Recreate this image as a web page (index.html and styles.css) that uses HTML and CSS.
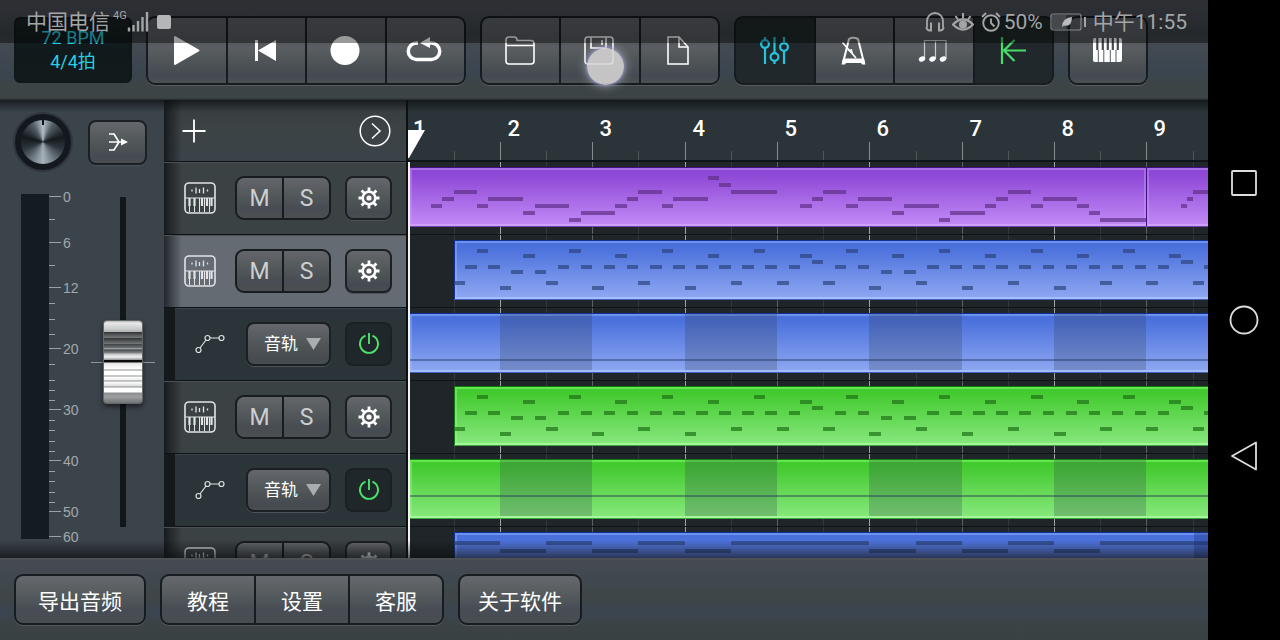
FILE: index.html
```html
<!DOCTYPE html>
<html lang="zh-CN">
<head>
<meta charset="utf-8">
<title>音轨编辑</title>
<link rel="stylesheet" href="styles.css">
</head>
<body>
<svg class="defs" width="0" height="0" aria-hidden="true">
  <symbol id="synth" viewBox="0 0 32 32">
    <rect x="1" y="1" width="30" height="30" rx="4" fill="none" stroke="#e2e4e6" stroke-width="1.6"/>
    <path d="M1 16h30" stroke="#e2e4e6" stroke-width="1"/>
    <path d="M8 7.500v2M12 5.500v6M15.500 7v4M19.500 5.500v6M23.500 7.500v2" stroke="#e2e4e6" stroke-width="1.300"/>
    <path d="M5.500 16v14M10.500 16v14M15.500 16v14M20.500 16v14M25.500 16v14" stroke="#e2e4e6" stroke-width="1"/>
    <path d="M5.500 16v8M10.500 16v8M18 16v8M23 16v8M27.500 16v8" stroke="#e2e4e6" stroke-width="2.200"/>
  </symbol>
  <symbol id="gear" viewBox="0 0 24 24">
    <g stroke="#fff" fill="none"><circle cx="12" cy="12" r="6.300" stroke-width="2.600"/><circle cx="12" cy="12" r="2.600" fill="#fff" stroke="none"/>
    <path d="M12 1.500v4.500M12 18v4.500M1.500 12h4.500M18 12h4.500M4.600 4.600l3 3M16.400 16.400l3 3M4.600 19.400l3-3M16.400 7.600l3-3" stroke-width="2.800"/></g>
  </symbol>
  <symbol id="curve" viewBox="0 0 30 20">
    <g fill="none" stroke="#dfe2e4" stroke-width="1.200"><circle cx="3.500" cy="16" r="2.500"/><circle cx="12.500" cy="4" r="2.500"/><circle cx="26.500" cy="4" r="2.500"/><path d="M5 14l6-8M15 4h9"/></g>
  </symbol>
  <symbol id="power" viewBox="0 0 24 24">
    <path d="M8.500 3.600a9 9 0 1 0 7 0M12 1v11" fill="none" stroke="#4be36b" stroke-width="1.900"/>
  </symbol>
</svg>

<div class="screen">
  <div class="app">
    <header class="toolbar">
      <button class="lcd"><span>72 BPM</span><span>4/4拍</span></button>
      <div class="group four">
        <button class="tool" aria-label="播放"><svg class="icon" viewBox="0 0 36 36"><path d="M7 4v27L30.500 17.500z" fill="#fff" stroke="#fff" stroke-width="2" stroke-linejoin="round"/></svg></button>
        <button class="tool" aria-label="回到开头"><svg class="icon" viewBox="0 0 36 36"><path d="M8 7h3v21H8zM29 7v21L11 17.500z" fill="#fff"/></svg></button>
        <button class="tool" aria-label="录音"><svg class="icon" viewBox="0 0 36 36"><circle cx="18" cy="17.500" r="14.500" fill="#fff"/></svg></button>
        <button class="tool" aria-label="循环"><svg class="icon" viewBox="0 0 36 36"><path d="M12 10h-1.500a8 8 0 0 0 0 16.500h15a8 8 0 0 0 0-16.500H23" fill="none" stroke="#fff" stroke-width="3.500"/><path d="M14 10l10-6v11z" fill="#fff"/></svg></button>
      </div>
      <div class="group three">
        <button class="tool" aria-label="打开"><svg class="icon line" viewBox="0 0 36 36"><path d="M4 11V7q0-3 3-3h5q3 0 3 3v.500h14q3 0 3 3V28q0 3-3 3H7q-3 0-3-3zM4 12.500h28"/></svg></button>
        <button class="tool" aria-label="保存"><svg class="icon line" viewBox="0 0 36 36"><rect x="4" y="4" width="28" height="27" rx="3"/><path d="M10 4v11h15V4M21 7v5"/></svg></button>
        <button class="tool" aria-label="新建"><svg class="icon line" viewBox="0 0 36 36"><path d="M8 4h11l9 10v17H8zM19 4v10h9"/></svg></button>
      </div>
      <div class="group four">
        <button class="tool on" aria-label="混音器"><svg class="icon" viewBox="0 0 36 36"><g fill="none" stroke="#23c6de" stroke-width="2.200"><path d="M9 4v3M9 15v16M18.500 4v16M18.500 28v3M28 4v6.500M28 18v13"/><circle cx="9" cy="11" r="3.900"/><circle cx="18.500" cy="24" r="3.900"/><circle cx="28" cy="14" r="3.900"/></g></svg></button>
        <button class="tool" aria-label="节拍器"><svg class="icon" viewBox="0 0 36 36"><path d="M8 30l6-24q4-2.500 9 0l6 24" fill="none" stroke="#fff" stroke-width="2"/><path d="M8 25.500h21l1.500 6H27l-1-1.500H11l-1 1.500H6.500z" fill="#fff"/><path d="M7.500 9.500L21 25" stroke="#fff" stroke-width="1.600"/><path d="M12 17l5-1 1 5z" fill="#fff"/></svg></button>
        <button class="tool" aria-label="音符"><svg class="icon" viewBox="0 0 36 36"><path d="M9.500 26V7.500H31V26M20.500 7.500V26" fill="none" stroke="#c9cbcd" stroke-width="1.200"/><g fill="#fff"><ellipse cx="7" cy="26" rx="3.300" ry="2.600" transform="rotate(-25 7 26)"/><ellipse cx="17.500" cy="26" rx="3.300" ry="2.600" transform="rotate(-25 17.500 26)"/><ellipse cx="28" cy="26" rx="3.300" ry="2.600" transform="rotate(-25 28 26)"/></g></svg></button>
        <button class="tool on" aria-label="跟随"><svg class="icon" viewBox="0 0 36 36"><path d="M8 4v27M32 17.500H10M20.500 7L10 17.500 20.500 28" fill="none" stroke="#47dd68" stroke-width="2.200"/></svg></button>
      </div>
      <div class="group one">
        <button class="tool" aria-label="键盘"><svg class="icon" viewBox="0 0 36 36"><rect x="4" y="5" width="29" height="24" rx="2" fill="#fff"/><path d="M8.300 5v12M13.800 5v12M18.800 5v12M23.800 5v12M28.800 5v12" stroke="#444a4d" stroke-width="2.200"/><path d="M9.300 17v12M14.800 17v12M21.300 17v12M27 17v12" stroke="#565c60" stroke-width="1"/></svg></button>
      </div>
    </header>

    <main class="workspace">
      <section class="mixer">
        <div class="mixer-top">
          <div class="knob" role="slider" aria-label="声像" aria-valuenow="0"></div>
          <button class="key route" aria-label="路由"><svg width="22" height="20" viewBox="0 0 22 20"><path d="M2 2h5l5 8-5 8H2M2 10h13" fill="none" stroke="#fff" stroke-width="1.700"/><path d="M14 6.500l7 3.500-7 3.500z" fill="#fff"/></svg></button>
        </div>
        <div class="levels">
          <div class="meter"></div>
          <svg class="scale" id="scale" width="32" height="356" aria-hidden="true"></svg>
          <div class="fader"><input type="range" min="0" max="100" value="50" aria-label="音量"></div>
        </div>
      </section>

      <section class="tracks">
        <div class="tracks-head">
          <button class="plain" aria-label="添加音轨"><svg width="24" height="24" viewBox="0 0 24 24"><path d="M12 .500v23M.500 12h23" stroke="#fff" stroke-width="1.800"/></svg></button>
          <button class="plain" aria-label="展开"><svg width="32" height="32" viewBox="0 0 32 32"><g fill="none" stroke="#fff" stroke-width="1.500"><circle cx="16" cy="16" r="14.800"/><path d="M13 8.500l8 7.500-8 7.500"/></g></svg></button>
        </div>
        <div class="track"><svg class="inst"><use href="#synth"/></svg><div class="ctl"><div class="ms"><button>M</button><button>S</button></div><button class="key sq" aria-label="音轨设置"><svg class="gear"><use href="#gear"/></svg></button></div></div>
        <div class="track selected"><svg class="inst"><use href="#synth"/></svg><div class="ctl"><div class="ms"><button>M</button><button>S</button></div><button class="key sq" aria-label="音轨设置"><svg class="gear"><use href="#gear"/></svg></button></div></div>
        <div class="track sub"><svg class="auto"><use href="#curve"/></svg><div class="ctl"><div class="pick"><select class="key" aria-label="自动化参数"><option>音轨</option></select><svg class="caret" viewBox="0 0 15 12"><path d="M0 0h15L7.500 12z" fill="#a9acb0"/></svg></div><button class="key sq on" aria-label="启用"><svg class="gear"><use href="#power"/></svg></button></div></div>
        <div class="track"><svg class="inst"><use href="#synth"/></svg><div class="ctl"><div class="ms"><button>M</button><button>S</button></div><button class="key sq" aria-label="音轨设置"><svg class="gear"><use href="#gear"/></svg></button></div></div>
        <div class="track sub"><svg class="auto"><use href="#curve"/></svg><div class="ctl"><div class="pick"><select class="key" aria-label="自动化参数"><option>音轨</option></select><svg class="caret" viewBox="0 0 15 12"><path d="M0 0h15L7.500 12z" fill="#a9acb0"/></svg></div><button class="key sq on" aria-label="启用"><svg class="gear"><use href="#power"/></svg></button></div></div>
        <div class="track"><svg class="inst"><use href="#synth"/></svg><div class="ctl"><div class="ms"><button>M</button><button>S</button></div><button class="key sq" aria-label="音轨设置"><svg class="gear"><use href="#gear"/></svg></button></div></div>
      </section>

      <section class="timeline">
        <svg class="ruler" id="ruler"></svg>
        <div id="lanes"></div>
        <svg class="playhead" viewBox="0 0 18 29" aria-hidden="true"><path d="M0 0h17L1 28H0z" fill="#fff"/></svg>
      </section>
    </main>

    <footer class="bottom">
      <div class="menu"><button class="wide">导出音频</button></div>
      <div class="menu"><button>教程</button><button>设置</button><button>客服</button></div>
      <div class="menu"><button class="about">关于软件</button></div>
    </footer>

    <div class="status">
      <div class="status-side">
        <span>中国电信</span><small>4G</small>
        <svg class="signal" width="22" height="20" viewBox="0 0 22 20"><path d="M2 15.500v4M6.500 13v6.500M11 9v10.500M15.500 5v14.500M20 0v19.500" stroke="#a3a5a7" stroke-width="2.400"/></svg>
        <i class="stop"></i>
      </div>
      <div class="status-side right">
        <svg width="20" height="20" viewBox="0 0 20 20"><path d="M2 15V9a8 8 0 0 1 16 0v6" fill="none" stroke="#a3a5a7" stroke-width="1.800"/><path d="M6 10.500v8H4.500Q1.500 18 1.500 15M14 10.500v8h1.500q3-.500 3-3.500" fill="none" stroke="#a3a5a7" stroke-width="2"/></svg>
        <svg width="22" height="20" viewBox="0 0 22 20"><path d="M1 12.500q10-10 20 0-10 10-20 0z" fill="none" stroke="#a3a5a7" stroke-width="2.200"/><circle cx="11" cy="12.500" r="4" fill="#a3a5a7"/><path d="M11 1v5M3.500 4l2.500 3.500M18.500 4L16 7.500" stroke="#a3a5a7" stroke-width="2"/></svg>
        <svg class="alarm" width="20" height="20" viewBox="0 0 20 20"><g fill="none" stroke="#a3a5a7" stroke-width="1.900"><circle cx="10" cy="11" r="7.800"/><path d="M10 6.500V11l3.500 3.500M1 5l4-4M19 5l-4-4"/></g></svg>
        <span>50%</span>
        <svg class="battery" width="36" height="18" viewBox="0 0 36 18"><rect x="1" y="1" width="30" height="16" rx="2" fill="none" stroke="#85888a" stroke-width="1.200"/><path d="M2 2h14v14H2z" fill="#45494b"/><path d="M12 14q0-9 10-10 0 10-8 8.500z" fill="#b9bbbc"/><path d="M35 4v10" stroke="#a3a5a7" stroke-width="2"/></svg>
        <span>中午11:55</span>
      </div>
    </div>
    <div class="touch"></div>
  </div>

  <nav class="sysnav">
    <button class="plain" aria-label="最近任务"><svg width="32" height="32" viewBox="0 0 32 32"><rect x="4" y="4" width="24" height="24" rx="1" fill="none" stroke="#ddd" stroke-width="1.800"/></svg></button>
    <button class="plain" aria-label="主页"><svg width="32" height="32" viewBox="0 0 32 32"><circle cx="16" cy="16" r="13.500" fill="none" stroke="#ddd" stroke-width="1.800"/></svg></button>
    <button class="plain" aria-label="返回"><svg width="32" height="32" viewBox="0 0 32 32"><path d="M28 1.500v27L4 15z" fill="none" stroke="#ddd" stroke-width="1.800" stroke-linejoin="round"/></svg></button>
  </nav>
</div>
<script src="app.js"></script>
</body>
</html>
```
FILE: styles.css
```css
* { box-sizing: border-box; }

body {
  margin: 0;
  background: #000;
  font-family: Roboto, "Noto Sans CJK SC", sans-serif;
  color: #fff;
}

button, select {
  margin: 0;
  padding: 0;
  border: 0;
  background: none;
  color: inherit;
  font-family: inherit;
}

svg { display: block; }
.defs { position: absolute; }

.screen { display: flex; height: 100vh; overflow: hidden; }
.app {
  position: relative;
  flex: 1;
  min-width: 0;
  display: flex;
  flex-direction: column;
  overflow: hidden;
}

/* toolbar */
.toolbar {
  display: flex;
  gap: 14px;
  padding: 16px 14px 15px;
  background: linear-gradient(#4c5056, #484c54 15%, #3b4346 35%, #444a52 45%, #3a454f 72%, #3c4445 86%, #3d4446 98%, #23292b);
}
.lcd {
  width: 118px;
  margin: 1px 0 2px;
  padding: 0 0 1px;
  border: 2px solid #11181a;
  border-radius: 6px;
  background: linear-gradient(#1a2222, #10191c 50%, #131a1b);
  color: #26cfe4;
  font-size: 18px;
  line-height: 24px;
}
.lcd span { display: block; }
.group, .ms, .menu {
  display: flex;
  gap: 2px;
  border: 2px solid #161c20;
  border-radius: 9px;
  background: #161c20;
  box-shadow: 0 1px 0 #565b60;
  overflow: hidden;
}
.four { width: 320px; }
.three { width: 240px; }
.one { width: 80px; }
.tool {
  flex: 1;
  height: 65px;
  padding-right: 2px;
  display: grid;
  place-items: center;
  background: linear-gradient(#5d6168, #565a5d 40%, #5b5f63 44%, #4f5557 65%, #444a52 88%, #4b5052);
}
.tool.on { background: #20282b; }
.icon { width: 36px; height: 36px; }
.line { fill: none; stroke: #fff; stroke-width: 1.6; }

/* workspace */
.workspace {
  position: relative;
  flex: 1;
  min-height: 0;
  display: grid;
  grid-template-columns: 164px 244px 1fr;
  overflow: hidden;
  background: #1f2528;
}
.workspace::before, .workspace::after {
  content: "";
  position: absolute;
  z-index: 3;
  left: 0;
  right: 0;
  pointer-events: none;
}
.workspace::before { top: 0; height: 12px; background: linear-gradient(rgba(10, 14, 16, .7), transparent); }
.workspace::after { bottom: 0; height: 18px; background: linear-gradient(transparent, rgba(10, 12, 14, .65)); }

.mixer { background: #3b434b; overflow: hidden; }
.mixer-top {
  display: flex;
  align-items: center;
  justify-content: space-between;
  padding: 14px 17px 0 15px;
}
.knob {
  position: relative;
  width: 56px;
  height: 56px;
  border: 6px solid #12181e;
  border-radius: 50%;
  background: conic-gradient(#b5bfc7, #525c65 30deg, #14191d 75deg, #2d353c 110deg, #a6b2bc 180deg, #2d353c 250deg, #14191d 285deg, #525c65 330deg, #b5bfc7);
  box-shadow: 0 0 0 2px #2f363d;
}
.knob::before {
  content: "";
  position: absolute;
  top: 0;
  left: 21px;
  width: 2px;
  height: 5px;
  background: #0d1215;
}
.key {
  border: 2px solid #1b2024;
  border-radius: 8px;
  background: linear-gradient(#65676c, #565b5e 35%, #4c5154 65%, #454b52 85%, #484d4f);
  box-shadow: 0 1px 0 #4c5257;
  display: grid;
  place-items: center;
}
.route { width: 59px; height: 45px; }
.levels { display: flex; align-items: flex-start; padding: 24px 0 0 21px; }
.meter { width: 28px; height: 345px; background: #121c21; }
.scale { overflow: visible; }
.scale text { font: 14px "Liberation Sans", sans-serif; fill: #a3a8ab; }
.scale path { stroke: #9ba1a5; }
.fader {
  position: relative;
  width: 64px;
  margin: 3px 0 0 10px;
  display: flex;
  justify-content: center;
}
.fader::before {
  content: "";
  position: absolute;
  left: 0;
  right: 0;
  top: 50%;
  height: 1px;
  background: #90979b;
}
.fader input {
  position: relative;
  appearance: none;
  writing-mode: vertical-lr;
  direction: rtl;
  width: 42px;
  height: 330px;
  margin: 0;
  background: linear-gradient(#12181a, #12181a) center / 6px 100% no-repeat;
}
.fader input::-webkit-slider-thumb {
  appearance: none;
  width: 40px;
  height: 84px;
  border: 1px solid #63686b;
  border-radius: 4px;
  box-shadow: 0 3px 5px rgba(0, 0, 0, .5);
  background: linear-gradient(#b5b6b6 0, #e9e9e9 2px, #c9caca 8px, #aeb0b0 11px, #303233 11px, #55585a 14px, #77797a 17px, #303233 17px, #6b6e70 22px, #a5a7a8 22px, #3e4143 23px, #707375 27px, #b8b9ba 27px, #4b4e50 29px, #84888a 32px, #c4c4c4 33px, #f1f1f1 36px, #8d9092 39px, #0b0c0c 39px, #0b0c0c 41px, #e6e6e6 42px, #fff 48px, #8e8f8f 49px, #fff 50px, #fff 54px, #909292 55px, #fff 56px, #eee 59px, #8f9191 60px, #fff 61px, #ddd 65px, #8c8e8e 66px, #fff 67px, #fff 71px, #8b8e8f 72px, #9ea0a0 76px, #6e7272 82px);
}

/* track list */
.tracks {
  overflow: hidden;
  background: #14191c;
  border-right: 2px solid #0c1012;
}
.tracks-head, .track {
  display: flex;
  align-items: center;
  justify-content: space-between;
  border-bottom: 1px solid #0d1216;
}
.tracks-head {
  height: 62px;
  padding: 0 15px 0 18px;
  background: linear-gradient(90deg, #161b1e, transparent 18px), linear-gradient(#373c3f, #3c4345 50%, #3b434b);
}
.plain { display: grid; place-items: center; }
.track {
  height: 73px;
  padding: 0 14px 0 20px;
  background: linear-gradient(90deg, #161b1e, transparent 18px), #3b4244;
  box-shadow: inset 0 1px 0 #4b5154;
}
.track.selected { background: linear-gradient(90deg, #22282c, transparent 18px), #646b73; }
.track.sub {
  margin-left: 11px;
  padding-left: 20px;
  background: #2b3439;
  box-shadow: inset 0 1px 0 #3c4549;
}
.inst { width: 32px; height: 32px; }
.auto { width: 30px; height: 20px; }
.ctl { display: flex; gap: 14px; }
.ms { width: 96px; height: 44px; box-shadow: none; }
.ms button {
  flex: 1;
  color: #cdcfd0;
  font-size: 23px;
  background: linear-gradient(#63666a, #54595c 40%, #484d54 75%, #4b4f50);
}
.sq { width: 47px; height: 44px; }
.key.on { background: #20272a; box-shadow: none; }
.gear { width: 24px; height: 24px; }
.pick { position: relative; }
.pick select {
  appearance: none;
  width: 85px;
  height: 44px;
  padding-left: 16px;
  font-size: 17px;
}
.caret { position: absolute; right: 10px; top: 16px; width: 15px; height: 12px; pointer-events: none; }

/* timeline */
.timeline { position: relative; min-width: 0; overflow: hidden; }
.ruler { width: 100%; height: 62px; background: #2b3438; border-bottom: 2px solid #0e1417; }
.ruler text { font-size: 22px; font-weight: 500; fill: #fff; }
.lane { width: 100%; height: 73px; border-bottom: 1px solid #0f1416; }
.timeline::after {
  content: "";
  position: absolute;
  left: 0;
  top: 62px;
  bottom: 0;
  width: 2px;
  background: #f2f2f2;
}
.playhead { position: absolute; left: 0; top: 30px; width: 18px; height: 29px; }

/* bottom menu */
.bottom {
  display: flex;
  align-items: flex-start;
  gap: 14px;
  height: 82px;
  padding: 14px;
  border-top: 2px solid #4e5154;
  background: linear-gradient(#454a52, #3f484e 30%, #3f4647 42%, #3b4550 66%, #3b4345 80%, #3a4143);
}
.menu button {
  height: 47px;
  padding: 0 25px;
  font-size: 21px;
  background: linear-gradient(#66686d, #595e61 30%, #50575a 50%, #474c55 72%, #484e50);
}
.menu .wide { padding: 0 22px; }
.menu .about { padding: 0 18px; }

/* system status */
.status {
  position: absolute;
  z-index: 5;
  left: 0;
  right: 0;
  top: 0;
  height: 43px;
  display: flex;
  justify-content: space-between;
  padding: 0 21px 0 26px;
  background: rgba(0, 0, 0, .4);
  color: #a3a5a7;
  font-size: 21px;
  font-weight: 400;
  line-height: 44px;
  pointer-events: none;
}
.status-side { display: flex; align-items: center; }
.right { gap: 7px; }
.alarm { margin-right: -4px; }
.status small { padding-left: 3px; font-size: 11px; line-height: 32px; align-self: flex-start; }
.stop { width: 14px; height: 14px; margin-left: 8px; border-radius: 2px; background: #b4b6b8; }
.touch {
  position: absolute;
  z-index: 6;
  left: 587px;
  top: 48px;
  width: 37px;
  height: 37px;
  border-radius: 50%;
  background: rgba(215, 213, 213, .88);
  box-shadow: 0 0 3px 1px rgba(150, 150, 220, .7), 0 0 8px 3px rgba(200, 200, 210, .4);
  pointer-events: none;
}

.sysnav {
  width: 72px;
  background: #000;
  display: flex;
  flex-direction: column;
  align-items: center;
  justify-content: center;
  gap: 105px;
}
```
FILE: app.js
```js
const NS = 'http://www.w3.org/2000/svg';
const BAR = 92.35;
const STEP = BAR / 8;
const END = 240;

function add(parent, tag, attrs, text) {
  const el = document.createElementNS(NS, tag);
  for (const k in attrs) el.setAttribute(k, attrs[k]);
  if (text !== undefined) el.textContent = text;
  parent.appendChild(el);
  return el;
}
const px = step => Math.round(step * STEP + 0.6);

/* decibel scale */
const scale = document.getElementById('scale');
const marks = [[0, 3], [6, 49], [12, 94], [20, 155], [30, 216], [40, 267], [50, 318], [60, 343]];
marks.forEach(([db, y]) => {
  add(scale, 'path', { d: `M0 ${y - 0.5}h12` });
  add(scale, 'text', { x: 14, y: y + 5 }, db);
});
[25, 71, 109, 125, 140, 170, 186, 196, 206, 226, 236, 247, 257, 277, 287, 298, 308].forEach(y =>
  add(scale, 'path', { d: `M0 ${y + 0.5}h6` }));

/* ruler, drawn only as far as the visible width */
const ruler = document.getElementById('ruler');
const bars = Math.ceil(ruler.getBoundingClientRect().width / BAR);
for (let b = 0; b < bars; b++) {
  const x = px(b * 8) + 0.5;
  if (b) add(ruler, 'path', { d: `M${x - 1} 42v20`, stroke: '#858b8e' });
  add(ruler, 'path', { d: `M${px(b * 8 + 4) - 0.5} 51v11`, stroke: '#4d5659' });
  add(ruler, 'text', { x: b ? x + 6 : 5, y: 36 }, b + 1);
}

const COLORS = {
  purple: { top: '#8d47d6', bottom: '#c38bf6', edge: '#3f0f86', hi: '#a76fe6', lo: '#d0a0fa', note: '#5f2f88' },
  blue: { top: '#4a70dc', bottom: '#8fa8f2', edge: '#12309a', hi: '#6c92ee', lo: '#a4bdfb', note: '#2c4580' },
  green: { top: '#43ca2f', bottom: '#88e87e', edge: '#107a10', hi: '#63e64f', lo: '#a4f79a', note: '#1e7416' }
};
const PATTERN = [48, 32, 16, 32, 53, 37, 21, 37, 48, 32, 16, 32, 53, 32, 21, 32,
                 48, 32, 16, 32, 53, 32, 21, 32, 48, 32, 16, 32, 48, 32, 21, 27];
const arp = [];
for (let i = 4; i < END; i++) arp.push([i, i + 1, PATTERN[(i - 4) % 32]]);

const MELODY = [[2, 3, 44], [3, 4, 37], [4, 6, 30], [6, 7, 44], [7, 10, 37], [10, 11, 51], [11, 14, 44],
  [14, 15, 58], [15, 18, 51], [18, 19, 44], [19, 20, 37], [20, 22, 30], [22, 23, 44], [23, 26, 37],
  [26, 27, 16], [27, 28, 23], [28, 32, 30], [34, 35, 44], [35, 36, 37], [36, 38, 30], [38, 39, 44],
  [39, 42, 37], [42, 43, 51], [43, 46, 44], [46, 47, 58], [47, 50, 51], [50, 51, 44], [51, 52, 37],
  [52, 54, 30], [54, 55, 44], [55, 58, 37], [58, 59, 44], [59, 60, 51], [60, 64, 58],
  [67, 67.5, 44], [67.5, 68, 37], [68, 70, 30]];
const BASS = [[4, 8, 16], [8, 12, 24], [12, 16, 16], [16, 20, 24], [20, 24, 16], [24, 28, 24], [28, 40, 16],
  [40, 44, 24], [44, 48, 16], [48, 52, 24], [52, 56, 16], [56, 60, 24], [60, 72, 16]];

const LANES = [
  { color: 'purple', clips: [[0, 64], [64, END]], notes: MELODY },
  { color: 'blue', clips: [[4, END]], notes: arp },
  { color: 'blue', clips: [[0, END]], line: 52 },
  { color: 'green', clips: [[4, END]], notes: arp },
  { color: 'green', clips: [[0, END]], line: 42 },
  { color: 'blue', clips: [[4, END]], notes: BASS, shade: 68 }
];

LANES.forEach((lane, n) => {
  const c = COLORS[lane.color];
  const svg = add(document.getElementById('lanes'), 'svg', { class: 'lane' });
  const grad = add(add(svg, 'defs', {}), 'linearGradient', { id: 'fill' + n, x2: 0, y2: 1 });
  add(grad, 'stop', { offset: 0.1, 'stop-color': c.top });
  add(grad, 'stop', { offset: 1, 'stop-color': c.bottom });
  for (let s = 4; s < END; s += 4) {
    const stroke = s % 16 === 8 ? '#a0a4a5' : s % 8 ? '#32393c' : '#5a6163';
    add(svg, 'path', { d: `M${px(s) - 0.5} 0v73`, stroke });
  }
  lane.clips.forEach(([a, b]) => {
    const x = px(a) - (a ? 1 : 0), w = px(b) - x - 1;
    add(svg, 'rect', { x, y: 5, width: w, height: 60, fill: c.edge });
    add(svg, 'rect', { x: x + 1, y: 6, width: w - 1, height: 58, fill: `url(#fill${n})` });
    add(svg, 'rect', { x: x + 1, y: 6, width: w - 1, height: 2, fill: c.hi });
    add(svg, 'rect', { x: x + 1, y: 62, width: w - 1, height: 2, fill: c.lo });
    add(svg, 'rect', { x: x + 1, y: 8, width: 2, height: 54, fill: c.lo, opacity: 0.4 });
    add(svg, 'rect', { x: x + w - 2, y: 8, width: 2, height: 54, fill: c.lo, opacity: 0.4 });
    add(svg, 'rect', { x, y: 64, width: w, height: 1, fill: c.bottom, opacity: 0.4 });
  });
  (lane.notes || []).forEach(([a, b, y]) =>
    add(svg, 'rect', { x: px(a) - 1, y: y - 2, width: px(b) - px(a), height: 4, fill: c.note, opacity: 0.7 }));
  if (lane.line) {
    for (let s = 8; s < END; s += 16) {
      add(svg, 'rect', { x: px(s) - 1, y: 6, width: px(s + 8) - px(s), height: 56, fill: '#2c3c4a', opacity: 0.24 });
    }
    add(svg, 'rect', { x: 0, y: lane.line - 1, width: px(END), height: 2, fill: '#1c2f5a', opacity: 0.42 });
  }
  if (lane.shade) add(svg, 'rect', { x: px(lane.shade), y: 6, width: 2000, height: 60, fill: '#16307a', opacity: 0.35 });
});
```
